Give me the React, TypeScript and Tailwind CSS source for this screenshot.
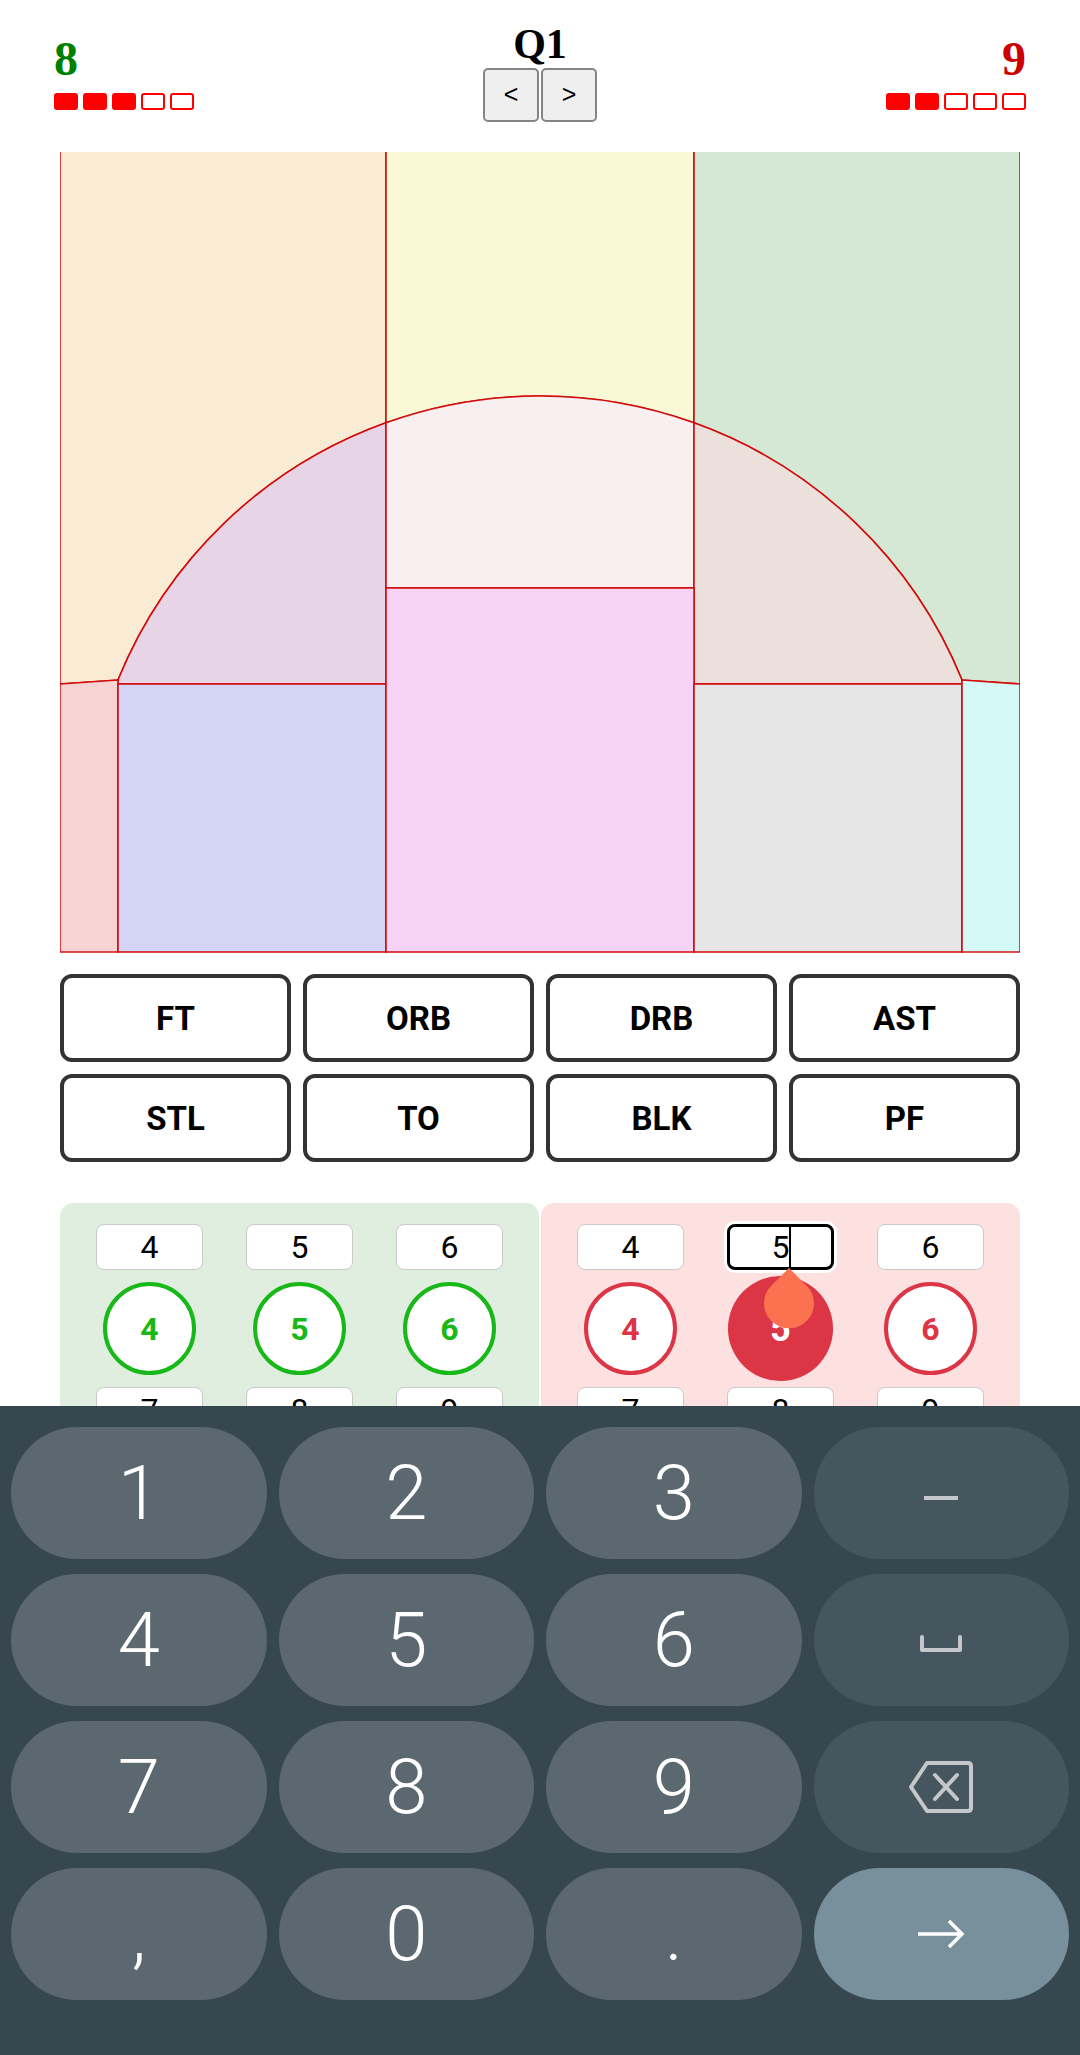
const STATS = ["FT", "ORB", "DRB", "AST", "STL", "TO", "BLK", "PF"];

function Fouls({ filled }: { filled: number }) {
  return (
    <div className="mt-[10px] flex gap-[5px]">
      {[0, 1, 2, 3, 4].map((i) => (
        <div
          key={i}
          className={
            i < filled
              ? "h-[17px] w-[24px] rounded-[3px] border-2 border-[#ff0000] bg-[#ff0000]"
              : "h-[17px] w-[24px] rounded-[3px] border-2 border-[#ff0000] bg-white"
          }
        />
      ))}
    </div>
  );
}

function Court() {
  const s = { stroke: "#d00000", strokeWidth: 1.6, strokeOpacity: 0.9 };
  return (
    <svg viewBox="0 1 960 801" className="block h-[801px] w-[960px]">
      <path d="M0 0 H326 V271.8 A455.5 455.5 0 0 0 58 529 L0 533 Z" fill="#faecd4" {...s} />
      <path d="M326 0 H634 V271.8 A455.5 455.5 0 0 0 326 271.8 Z" fill="#f9f9d5" {...s} />
      <path d="M634 0 H960 V533 L902 529 A455.5 455.5 0 0 0 634 271.8 Z" fill="#d4e8d4" {...s} />
      <path d="M58 529 A455.5 455.5 0 0 1 326 271.8 V533 H58 Z" fill="#e7d4e7" {...s} />
      <path d="M326 271.8 A455.5 455.5 0 0 1 634 271.8 V437 H326 Z" fill="#f9eff0" {...s} />
      <path d="M634 271.8 A455.5 455.5 0 0 1 902 529 V533 H634 Z" fill="#ebe0db" {...s} />
      <path d="M0 533 L58 529 V801 H0 Z" fill="#f8d3d4" {...s} />
      <rect x="58" y="533" width="268" height="268" fill="#d4d4f7" {...s} />
      <rect x="326" y="437" width="308" height="364" fill="#f8d3f8" {...s} />
      <rect x="634" y="533" width="268" height="268" fill="#e6e6e6" {...s} />
      <path d="M960 533 L902 529 V801 H960 Z" fill="#d4f9f7" {...s} />
    </svg>
  );
}

function NumBox({ n, focused }: { n: string; focused?: boolean }) {
  if (focused) {
    return (
      <div className="relative flex h-[46px] w-[107px] items-center justify-center rounded-[8px] border-[3px] border-black bg-white text-[32px] leading-none text-black ring-[3px] ring-white">
        {n}
        <span className="absolute top-0 bottom-0 left-[calc(50%+8px)] w-[2px] bg-black" />
        <svg
          viewBox="0 0 50 61"
          className="absolute top-full left-[calc(50%-17px)] z-10 mt-[1px] h-[61px] w-[50px]"
        >
          <path d="M25 0 L42.7 17.7 A25 25 0 1 1 7.3 17.7 Z" fill="#fb7250" />
        </svg>
      </div>
    );
  }
  return (
    <div className="flex h-[46px] w-[107px] items-center justify-center rounded-[8px] border-[1.5px] border-[#c9c9c9] bg-white text-[32px] leading-none text-black">
      {n}
    </div>
  );
}

function Player({ n, team, active }: { n: string; team: "home" | "away"; active?: boolean }) {
  if (active) {
    return (
      <div className="flex h-[93px] w-[93px] scale-[1.13] items-center justify-center rounded-full bg-[#dc3545] text-[32px] font-bold leading-none text-white">
        {n}
      </div>
    );
  }
  return (
    <div
      className={
        team === "home"
          ? "flex h-[93px] w-[93px] items-center justify-center rounded-full border-[4.5px] border-[#18b818] bg-white text-[32px] font-bold leading-none text-[#18b818]"
          : "flex h-[93px] w-[93px] items-center justify-center rounded-full border-[4.5px] border-[#dc3545] bg-white text-[32px] font-bold leading-none text-[#dc3545]"
      }
    >
      {n}
    </div>
  );
}

// rows below "7 8 9" sit under the keyboard, so only the visible part is drawn
function Roster({ team }: { team: "home" | "away" }) {
  const cols = [
    ["4", "7"],
    ["5", "8"],
    ["6", "9"],
  ];
  return (
    <div
      className={
        team === "home"
          ? "flex h-[420px] justify-center gap-[43px] rounded-t-[13px] bg-[#dfeedf] pt-[21px]"
          : "flex h-[420px] justify-center gap-[43px] rounded-t-[13px] bg-[#fde0e0] pt-[21px]"
      }
    >
      {cols.map(([top, next], ci) => {
        const focused = team === "away" && ci === 1;
        return (
          <div key={ci} className="flex w-[107px] flex-col items-center gap-[12px]">
            <NumBox n={top} focused={focused} />
            <Player n={top} team={team} active={focused} />
            <NumBox n={next} />
          </div>
        );
      })}
    </div>
  );
}

function Key({ children, kind = "num" }: { children: React.ReactNode; kind?: "num" | "fn" | "go" }) {
  const bg = kind === "num" ? "bg-[#5b686f]" : kind === "fn" ? "bg-[#46565e]" : "bg-[#78909c]";
  return (
    <div
      className={`flex h-[132px] items-center justify-center rounded-full ${bg} font-['Roboto',sans-serif] text-[76px] font-light leading-none text-white`}
    >
      {children}
    </div>
  );
}

export default function App() {
  return (
    <div className="relative h-[2055px] w-[1080px] overflow-hidden bg-white font-['Roboto',sans-serif]">
      <header className="grid grid-cols-[1fr_auto_1fr] items-start px-[54px] pt-[23px]">
        <div className="flex flex-col items-start pt-[12px]">
          <div className="font-['Liberation_Serif',serif] text-[48px] font-bold leading-none text-[#008000]">8</div>
          <Fouls filled={3} />
        </div>
        <div className="flex flex-col items-center">
          <div className="font-['Liberation_Serif',serif] text-[42px] font-bold leading-none text-black">Q1</div>
          <div className="mt-[3px] flex gap-[2px]">
            <button className="flex h-[54px] w-[56px] items-center justify-center rounded-[5px] border-2 border-[#858585] bg-[#efefef] font-['Liberation_Sans',sans-serif] text-[25px] text-black">
              &lt;
            </button>
            <button className="flex h-[54px] w-[56px] items-center justify-center rounded-[5px] border-2 border-[#858585] bg-[#efefef] font-['Liberation_Sans',sans-serif] text-[25px] text-black">
              &gt;
            </button>
          </div>
        </div>
        <div className="flex flex-col items-end pt-[12px]">
          <div className="font-['Liberation_Serif',serif] text-[48px] font-bold leading-none text-[#cc0000]">9</div>
          <Fouls filled={2} />
        </div>
      </header>

      <div className="mt-[30px] px-[60px]">
        <Court />
      </div>

      <div className="mt-[21px] grid grid-cols-4 gap-[12px] px-[60px]">
        {STATS.map((s) => (
          <button
            key={s}
            className="flex h-[88px] items-center justify-center rounded-[12px] border-[4px] border-[#333333] bg-white text-[33px] font-bold leading-none text-black"
          >
            {s}
          </button>
        ))}
      </div>

      <div className="mt-[41px] grid grid-cols-2 gap-[2px] px-[60px]">
        <Roster team="home" />
        <Roster team="away" />
      </div>

      {/* soft keyboard */}
      <div className="absolute inset-x-0 top-[1406px] bottom-0 grid grid-cols-4 content-start gap-x-[12px] gap-y-[15px] bg-[#37474f] px-[11px] pt-[21px]">
        <Key>1</Key>
        <Key>2</Key>
        <Key>3</Key>
        <Key kind="fn">
          <div className="mt-[10px] h-[4px] w-[34px] bg-[#c4c8ca]" />
        </Key>
        <Key>4</Key>
        <Key>5</Key>
        <Key>6</Key>
        <Key kind="fn">
          <svg viewBox="0 0 44 20" className="mt-[8px] h-[20px] w-[44px]">
            <path d="M3 3 V16 H41 V3" fill="none" stroke="#c4c8ca" strokeWidth="4" strokeLinejoin="round" strokeLinecap="round" />
          </svg>
        </Key>
        <Key>7</Key>
        <Key>8</Key>
        <Key>9</Key>
        <Key kind="fn">
          <svg viewBox="0 0 66 54" className="h-[54px] w-[66px]">
            <path
              d="M19 3 H60 Q63 3 63 6 V48 Q63 51 60 51 H19 L3 27 Z"
              fill="none"
              stroke="#c4c8ca"
              strokeWidth="4"
              strokeLinejoin="round"
            />
            <path d="M27 15 L49 39 M49 15 L27 39" stroke="#c4c8ca" strokeWidth="4" strokeLinecap="round" />
          </svg>
        </Key>
        <Key>,</Key>
        <Key>0</Key>
        <Key>.</Key>
        <Key kind="go">
          <svg viewBox="0 0 50 32" className="h-[32px] w-[50px]">
            <path d="M2 16 H46 M33 3 L46 16 L33 29" fill="none" stroke="#ffffff" strokeWidth="3.5" />
          </svg>
        </Key>
      </div>
    </div>
  );
}
